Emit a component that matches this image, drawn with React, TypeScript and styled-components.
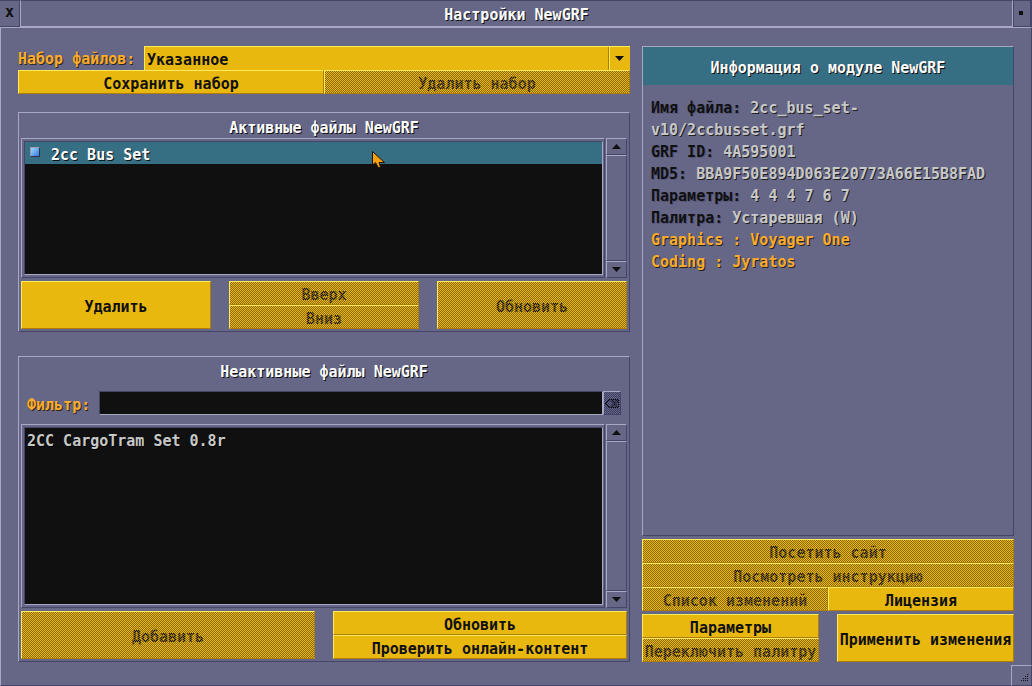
import React from "react";
import styled, { createGlobalStyle } from "styled-components";

const BG = "#666687";
const LIGHT = "#a8a8c4";
const DARK = "#45456a";
const YEL = "#e8b80e";
const YEL_L = "#fcec5c";
const YEL_D = "#b07c08";
const TEAL = "#366f84";
const BLACK = "#101010";

const Global = createGlobalStyle`
  html, body { margin: 0; padding: 0; background: ${BG}; }
  #root { width: 1032px; height: 686px; overflow: hidden; }
  * { box-sizing: border-box; }
`;

const Win = styled.div`
  width: 1032px;
  height: 686px;
  display: flex;
  flex-direction: column;
  background: ${BG};
  font-family: "DejaVu Sans Mono", monospace;
  font-weight: 700;
  font-size: 15px;
  position: relative;
  cursor: default;
`;

const TitleBar = styled.div`
  height: 27px;
  flex: none;
  display: flex;
`;

const CloseBtn = styled.div`
  width: 20px;
  display: flex;
  align-items: center;
  justify-content: center;
  color: ${BLACK};
  padding-bottom: 3px;
  border-right: 1px solid ${DARK};
  border-top: 1px solid ${DARK};
  border-bottom: 1px solid ${DARK};
`;

const Caption = styled.div`
  flex: 1;
  display: flex;
  align-items: center;
  justify-content: center;
  color: #fcfcfc;
  text-shadow: 1px 1px 0 #101010;
  padding-top: 3px;
  border: 1px solid;
  border-color: ${DARK} ${LIGHT} ${LIGHT} ${LIGHT};
`;

const Sticky = styled.div`
  width: 19px;
  display: flex;
  align-items: center;
  justify-content: center;
  padding-right: 2px;
  padding-bottom: 1px;
  border: 1px solid ${DARK};
  border-right-width: 2px;
  &::after {
    content: "";
    width: 4px;
    height: 4px;
    background: ${BLACK};
  }
`;

const Body = styled.div`
  flex: 1;
  display: flex;
  gap: 12px;
  padding: 18px 17px 0 18px;
  border: 1px solid;
  border-color: ${LIGHT} ${DARK} ${DARK} ${LIGHT};
`;

const LeftCol = styled.div`
  width: 612px;
  flex: none;
  margin-left: -1px;
  margin-right: 1px;
  display: flex;
  flex-direction: column;
`;

const RightCol = styled.div`
  width: 372px;
  flex: none;
  margin-left: -1px;
  display: flex;
  flex-direction: column;
`;

const Row = styled.div`
  display: flex;
  flex: none;
  height: 24px;
`;

const SetLabel = styled.div`
  width: 126px;
  display: flex;
  align-items: center;
  padding-top: 2px;
  color: #fcac2c;
  text-shadow: 1px 1px 0 #2c2418;
`;

const Btn = styled.div<{ $off?: boolean; $w?: number }>`
  position: relative;
  ${(p) => (p.$w ? `width:${p.$w}px;flex:none;` : "flex:1 1 100px;")}
  min-width: 0;
  height: 100%;
  display: flex;
  align-items: center;
  justify-content: center;
  padding-top: 3px;
  white-space: nowrap;
  background: ${YEL};
  border: 1px solid;
  border-color: ${YEL_L} ${YEL_D} ${YEL_D} ${YEL_L};
  color: ${BLACK};
  ${(p) =>
    p.$off
      ? `&::after {
    content: "";
    position: absolute;
    inset: 0;
    background-image: conic-gradient(#8c6810 25%, transparent 0 50%, #8c6810 0 75%, transparent 0);
    background-size: 2px 2px;
  }`
      : ""}
`;

const Dropdown = styled.div`
  flex: 1;
  display: flex;
  background: ${YEL};
  border-top: 1px solid ${YEL_L};
  border-left: 1px solid ${YEL_L};
`;

const DropValue = styled.div`
  flex: 1;
  display: flex;
  align-items: center;
  padding: 2px 0 0 2px;
  color: ${BLACK};
`;

const DropArrow = styled.div`
  width: 22px;
  display: flex;
  align-items: center;
  justify-content: center;
  border-left: 1px solid ${YEL_D};
  box-shadow: inset 1px 0 0 ${YEL_L};
`;

const Stack = styled.div`
  flex: 1 1 100px;
  min-width: 0;
  display: flex;
  flex-direction: column;
  & > * { flex: 1 1 0; height: auto; min-height: 0; }
`;

const Frame = styled.div<{ $h: number; $mt: number }>`
  height: ${(p) => p.$h}px;
  flex: none;
  margin-top: ${(p) => p.$mt}px;
  border: 1px solid;
  border-color: ${LIGHT} ${DARK} ${DARK} ${LIGHT};
  padding: 0 2px;
  display: flex;
  flex-direction: column;
`;

const FrameTitle = styled.div`
  height: 25px;
  display: flex;
  align-items: center;
  justify-content: center;
  padding-top: 5px;
  color: #fcfcfc;
  text-shadow: 1px 1px 0 #101010;
  flex: none;
`;

const ListRow = styled.div<{ $h: number; $mt?: number }>`
  height: ${(p) => p.$h}px;
  margin-top: ${(p) => p.$mt ?? 0}px;
  display: flex;
  flex: none;
`;

const ListBox = styled.div`
  flex: 1;
  margin-right: 1px;
  padding: 2px 1px 2px 2px;
  border: 1px solid;
  border-color: ${LIGHT} ${DARK} ${DARK} ${LIGHT};
  display: flex;
  background: ${BG};
`;

const ListInner = styled.div`
  flex: 1;
  background: ${BLACK};
  border: 1px solid;
  border-color: ${DARK} ${LIGHT} ${LIGHT} ${DARK};
  display: flex;
  flex-direction: column;
`;

const ActiveItem = styled.div`
  height: 22px;
  background: ${TEAL};
  display: flex;
  align-items: center;
  gap: 11px;
  padding: 4px 0 0 5px;
  color: #fcfcfc;
  text-shadow: 1px 1px 0 #101010;
`;

const Sprite = styled.span`
  width: 10px;
  height: 10px;
  background: linear-gradient(135deg, #a4d4fc, #2c7ce0);
  border: 1px solid;
  border-color: #9c9cb0 #30304c #30304c #9c9cb0;
  margin-bottom: 6px;
`;

const PlainItem = styled.div`
  height: 22px;
  display: flex;
  align-items: center;
  padding: 4px 0 0 2px;
  color: #c8c8c8;
  text-shadow: 1px 1px 0 #000;
`;

const Scroll = styled.div`
  width: 21px;
  flex: none;
  display: flex;
  flex-direction: column;
`;

const ScrollBtn = styled.div`
  height: 17px;
  flex: none;
  display: flex;
  align-items: center;
  justify-content: center;
  border: 1px solid;
  border-color: ${LIGHT} ${DARK} ${DARK} ${LIGHT};
`;

const ScrollTrack = styled.div`
  flex: 1;
  border: 1px solid;
  border-color: ${LIGHT} ${DARK} ${DARK} ${LIGHT};
`;

const BtnRow = styled.div<{ $gap: number }>`
  height: 48px;
  flex: none;
  margin-top: 3px;
  display: flex;
  gap: ${(p) => p.$gap}px;
`;

const FilterRow = styled.div`
  height: 24px;
  flex: none;
  margin-top: 9px;
  display: flex;
  align-items: stretch;
  padding-left: 6px;
`;

const FilterLabel = styled.div`
  width: 72px;
  display: flex;
  align-items: center;
  padding-top: 3px;
  color: #fcac2c;
  text-shadow: 1px 1px 0 #2c2418;
`;

const FilterInput = styled.div`
  width: 504px;
  background: ${BLACK};
  border: 1px solid;
  border-color: ${DARK} ${LIGHT} ${LIGHT} ${DARK};
`;

const FilterClear = styled.div`
  width: 18px;
  position: relative;
  background: ${BG};
  border: 1px solid;
  border-color: ${LIGHT} ${DARK} ${DARK} ${LIGHT};
  display: flex;
  align-items: center;
  justify-content: center;
  &::after {
    content: "";
    position: absolute;
    inset: 0;
    background-image: conic-gradient(#3c3c60 25%, transparent 0 50%, #3c3c60 0 75%, transparent 0);
    background-size: 2px 2px;
  }
`;

const InfoPanel = styled.div`
  height: 490px;
  flex: none;
  border: 1px solid;
  border-color: ${LIGHT} ${DARK} ${DARK} ${LIGHT};
  display: flex;
  flex-direction: column;
`;

const InfoHead = styled.div`
  height: 38px;
  flex: none;
  padding-top: 3px;
  background: ${TEAL};
  color: #fcfcfc;
  text-shadow: 1px 1px 0 #101010;
  display: flex;
  align-items: center;
  justify-content: center;
`;

const InfoBody = styled.div`
  padding: 12px 8px;
  line-height: 22px;
`;

const InfoLine = styled.div<{ $orange?: boolean }>`
  color: ${(p) => (p.$orange ? "#fcac2c" : "#c8c8c8")};
  text-shadow: 1px 1px 0 #202020;
  white-space: pre-wrap;
`;

const Key = styled.span`
  color: ${BLACK};
  text-shadow: 1px 1px 0 #55557a;
`;

const RightButtons = styled.div`
  margin-top: 3px;
  display: flex;
  flex-direction: column;
`;

const BottomRow = styled.div`
  height: 48px;
  margin-top: 3px;
  display: flex;
  gap: 18px;
`;

const Grip = styled.div`
  position: absolute;
  right: 0;
  bottom: 0;
  width: 21px;
  height: 21px;
  border: 1px solid;
  border-color: ${LIGHT} ${DARK} ${DARK} ${LIGHT};
  display: flex;
  align-items: flex-end;
  justify-content: flex-end;
  padding: 3px;
`;

const Cursor = styled.svg`
  position: absolute;
  left: 372px;
  top: 151px;
`;

const Up = () => (
  <svg width="9" height="5" viewBox="0 0 9 5"><path d="M4.5 0 9 5H0z" fill="#101010" /></svg>
);
const Down = () => (
  <svg width="9" height="5" viewBox="0 0 9 5"><path d="M0 0h9L4.5 5z" fill="#101010" /></svg>
);

const Sb = () => (
  <Scroll>
    <ScrollBtn><Up /></ScrollBtn>
    <ScrollTrack />
    <ScrollBtn><Down /></ScrollBtn>
  </Scroll>
);

export default function App() {
  return (
    <Win>
      <Global />
      <TitleBar>
        <CloseBtn>x</CloseBtn>
        <Caption>Настройки NewGRF</Caption>
        <Sticky />
      </TitleBar>
      <Body>
        <LeftCol>
          <Row>
            <SetLabel>Набор файлов:</SetLabel>
            <Dropdown>
              <DropValue>Указанное</DropValue>
              <DropArrow><Down /></DropArrow>
            </Dropdown>
          </Row>
          <Row>
            <Btn>Сохранить набор</Btn>
            <Btn $off>Удалить набор</Btn>
          </Row>
          <Frame $h={220} $mt={18}>
            <FrameTitle>Активные файлы NewGRF</FrameTitle>
            <ListRow $h={140}>
              <ListBox>
                <ListInner>
                  <ActiveItem><Sprite />2cc Bus Set</ActiveItem>
                </ListInner>
              </ListBox>
              <Sb />
            </ListRow>
            <BtnRow $gap={18}>
              <Btn>Удалить</Btn>
              <Stack>
                <Btn $off>Вверх</Btn>
                <Btn $off>Вниз</Btn>
              </Stack>
              <Btn $off>Обновить</Btn>
            </BtnRow>
          </Frame>
          <Frame $h={306} $mt={24}>
            <FrameTitle>Неактивные файлы NewGRF</FrameTitle>
            <FilterRow>
              <FilterLabel>Фильтр:</FilterLabel>
              <FilterInput />
              <FilterClear>
                <svg width="14" height="9" viewBox="0 0 14 9" fill="none" stroke="#000" strokeWidth="1.4">
                  <path d="M5 .5h8.500v8H5L.5 4.500zM6.500 1.500l6 6M12.500 1.500l-6 6" />
                </svg>
              </FilterClear>
            </FilterRow>
            <ListRow $h={184} $mt={9}>
              <ListBox>
                <ListInner>
                  <PlainItem>2CC CargoTram Set 0.8r</PlainItem>
                </ListInner>
              </ListBox>
              <Sb />
            </ListRow>
            <BtnRow $gap={18}>
              <Btn $w={294} $off>Добавить</Btn>
              <Stack>
                <Btn>Обновить</Btn>
                <Btn>Проверить онлайн-контент</Btn>
              </Stack>
            </BtnRow>
          </Frame>
        </LeftCol>
        <RightCol>
          <InfoPanel>
            <InfoHead>Информация о модуле NewGRF</InfoHead>
            <InfoBody>
              <InfoLine><Key>Имя файла:</Key> 2cc_bus_set-</InfoLine>
              <InfoLine>v10/2ccbusset.grf</InfoLine>
              <InfoLine><Key>GRF ID:</Key> 4A595001</InfoLine>
              <InfoLine><Key>MD5:</Key> BBA9F50E894D063E20773A66E15B8FAD</InfoLine>
              <InfoLine><Key>Параметры:</Key> 4 4 4 7 6 7</InfoLine>
              <InfoLine><Key>Палитра:</Key> Устаревшая (W)</InfoLine>
              <InfoLine $orange>Graphics : Voyager One</InfoLine>
              <InfoLine $orange>Coding : Jyratos</InfoLine>
            </InfoBody>
          </InfoPanel>
          <RightButtons>
            <Row><Btn $off>Посетить сайт</Btn></Row>
            <Row><Btn $off>Посмотреть инструкцию</Btn></Row>
            <Row>
              <Btn $off>Список изменений</Btn>
              <Btn>Лицензия</Btn>
            </Row>
          </RightButtons>
          <BottomRow>
            <Stack>
              <Btn>Параметры</Btn>
              <Btn $off>Переключить палитру</Btn>
            </Stack>
            <Stack><Btn>Применить изменения</Btn></Stack>
          </BottomRow>
        </RightCol>
      </Body>
      <Grip>
        <svg width="8" height="8" viewBox="0 0 8 8" fill="#101010">
          <path d="M7 0h1v1H7zM5 2h1v1H5zM7 2h1v1H7zM3 4h1v1H3zM5 4h1v1H5zM7 4h1v1H7zM1 6h1v1H1zM3 6h1v1H3zM5 6h1v1H5zM7 6h1v1H7z" />
        </svg>
      </Grip>
      <Cursor width="14" height="18" viewBox="0 0 14 18">
        <path d="M.5.5V14L3.500 11.500 6.500 17 8.500 16 7 11.500H12.500z" fill="#f5a010" stroke="#201004" strokeWidth="1" />
      </Cursor>
    </Win>
  );
}
